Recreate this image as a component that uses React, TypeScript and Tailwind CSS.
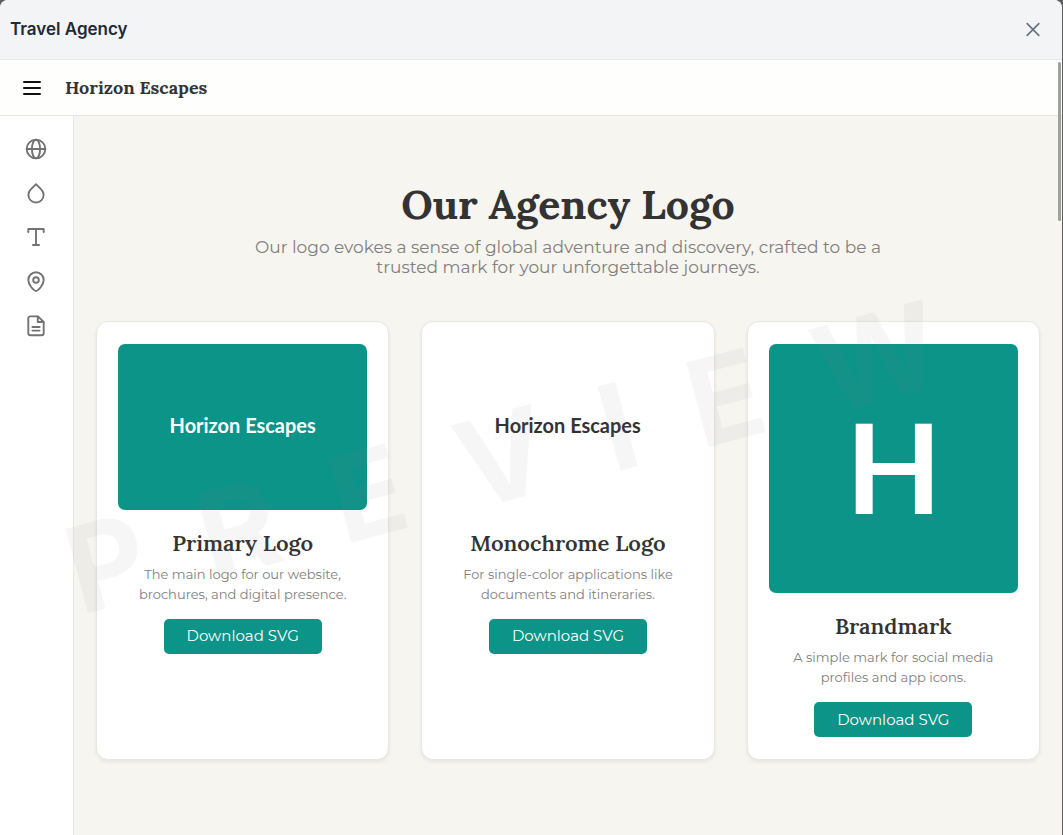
import type { ReactNode } from "react";

type LogoCardProps = {
  title: string;
  description: string;
  children: ReactNode;
};

const watermark = ["P", "R", "E", "V", "I", "E", "W"];

function GlobeIcon() {
  return (
    <>
      <circle cx="12" cy="12" r="9.3" />
      <ellipse cx="12" cy="12" rx="4.1" ry="9.3" />
      <path d="M2.7 12h18.6" />
    </>
  );
}

function DropIcon() {
  return <path d="M12 3.2 17.4 8.6A7.6 7.6 0 1 1 6.6 8.6Z" />;
}

function TypeIcon() {
  return <path d="M4.3 7V4h15.4v3M12 4v16M9 20h6" />;
}

function PinIcon() {
  return (
    <>
      <path d="M12 22c-1.6 0-7.7-5.6-7.7-11.1a7.7 7.7 0 0 1 15.4 0c0 5.5-6.1 11.1-7.7 11.1Z" />
      <circle cx="12" cy="11" r="2.8" />
    </>
  );
}

function DocumentIcon() {
  return (
    <>
      <path d="M14 3.4H6.3a2 2 0 0 0-2 2v14.8a2 2 0 0 0 2 2h11.4a2 2 0 0 0 2-2V9Z" />
      <path d="M13.8 3.6v5.4h5.6M8.4 14h7.2M8.4 17.6h7.2" />
    </>
  );
}

const navItems = [
  { label: "Logo", icon: <GlobeIcon /> },
  { label: "Colors", icon: <DropIcon /> },
  { label: "Typography", icon: <TypeIcon /> },
  { label: "Locations", icon: <PinIcon /> },
  { label: "Documents", icon: <DocumentIcon /> },
];

function LogoCard({ title, description, children }: LogoCardProps) {
  return (
    <article className="flex flex-col items-center rounded-xl border border-[#e9e7e1] bg-white px-[21px] py-[22px] text-center shadow-[0_2px_4px_rgba(0,0,0,0.07)]">
      {children}
      <h3 className="mt-[18px] font-['Lora','Liberation_Serif',serif] text-[22px] leading-[30px] font-semibold text-[#333333]">
        {title}
      </h3>
      <p className="mt-[6px] px-2 font-['Montserrat','Inter',sans-serif] text-[13px] leading-[20px] text-[#808080]">
        {description}
      </p>
      <button className="mt-[15px] h-[35px] w-[158px] rounded-[5px] bg-[#0d9488] font-['Montserrat','Inter',sans-serif] text-[15px] text-white">
        Download SVG
      </button>
    </article>
  );
}

export default function App() {
  return (
    <div className="min-h-screen bg-[#5f6062] pr-px">
      <div className="relative flex min-h-screen flex-col overflow-hidden rounded-t-[8px] bg-white">
        <header className="flex h-[60px] items-center justify-between border-b border-[#e5e7eb] bg-[#f3f4f6] pr-5 pl-[10px]">
          <h1 className="font-['Inter',sans-serif] text-[17px] font-semibold text-[#1f2937]">
            Travel Agency
          </h1>
          <button aria-label="Close" className="text-[#6b7280]">
            <svg width="18" height="18" viewBox="0 0 18 18" fill="none" stroke="currentColor" strokeWidth="1.7">
              <path d="m2.7 2.2 12.6 12.6M15.3 2.2 2.7 14.8" />
            </svg>
          </button>
        </header>

        <div className="relative flex grow flex-col">
          <div className="flex h-14 items-center gap-6 border-b border-[#e9e7e1] bg-[#fefefc] pl-[23px]">
            <button aria-label="Menu" className="text-[#111111]">
              <svg
                width="18"
                height="16"
                viewBox="0 0 18 16"
                fill="none"
                stroke="currentColor"
                strokeWidth="2"
                strokeLinecap="round"
              >
                <path d="M1 2h16M1 8h16M1 14h16" />
              </svg>
            </button>
            <span className="font-['Lora','Liberation_Serif',serif] text-[18px] font-bold text-[#333333]">
              Horizon Escapes
            </span>
          </div>

          <div className="flex grow">
            <nav className="flex w-[74px] shrink-0 flex-col items-center gap-5 border-r border-[#e9e7e1] bg-white pt-[21px] pr-px">
              {navItems.map((item) => (
                <a key={item.label} href="#" aria-label={item.label} className="text-[#737373]">
                  <svg
                    width="24"
                    height="24"
                    viewBox="0 0 24 24"
                    fill="none"
                    stroke="currentColor"
                    strokeWidth="1.9"
                    strokeLinecap="round"
                    strokeLinejoin="round"
                  >
                    {item.icon}
                  </svg>
                </a>
              ))}
            </nav>

            <main className="grow bg-[#f7f5f0] px-[22px] py-[60px]">
              <div className="text-center">
                <h2 className="font-['Lora','Liberation_Serif',serif] text-[41px] leading-[56px] font-bold text-[#333333]">
                  Our Agency Logo
                </h2>
                <p className="mx-auto mt-[5px] max-w-[640px] font-['Montserrat','Inter',sans-serif] text-[17px] leading-[20px] text-[#808080]">
                  Our logo evokes a sense of global adventure and discovery, crafted to be a trusted mark for your
                  unforgettable journeys.
                </p>
              </div>

              <div className="mt-11 grid grid-cols-3 gap-8">
                <LogoCard title="Primary Logo" description="The main logo for our website, brochures, and digital presence.">
                  <svg viewBox="0 0 300 200" className="w-full rounded-[7px] bg-[#0d9488] font-['Lato',sans-serif] font-bold">
                    <text x="150" y="107" fontSize="24" textAnchor="middle" fill="#ffffff">
                      Horizon Escapes
                    </text>
                  </svg>
                </LogoCard>
                <LogoCard title="Monochrome Logo" description="For single-color applications like documents and itineraries.">
                  <svg viewBox="0 0 300 200" className="w-full rounded-[7px] bg-white font-['Lato',sans-serif] font-bold">
                    <text x="150" y="107" fontSize="24" textAnchor="middle" fill="#333333">
                      Horizon Escapes
                    </text>
                  </svg>
                </LogoCard>
                <LogoCard title="Brandmark" description="A simple mark for social media profiles and app icons.">
                  <svg viewBox="0 0 200 200" className="w-full rounded-[7px] bg-[#0d9488] font-['Lato',sans-serif] font-bold">
                    <text x="100" y="136" fontSize="100" textAnchor="middle" fill="#ffffff">
                      H
                    </text>
                  </svg>
                </LogoCard>
              </div>
            </main>
          </div>

          {/* Watermark laid over the whole preview */}
          <div
            aria-hidden="true"
            className="pointer-events-none absolute inset-0 flex items-center justify-center overflow-hidden pt-1"
          >
            <div className="flex -rotate-15 gap-[58px] pr-[58px] font-['Inter',sans-serif] text-[120px] leading-none font-bold text-[#808080]/7">
              {watermark.map((letter, i) => (
                <span key={i}>{letter}</span>
              ))}
            </div>
          </div>

          <div className="absolute top-[2px] right-px h-[159px] w-[3px] rounded-full bg-[#9fa1a1]" />
        </div>
      </div>
    </div>
  );
}
